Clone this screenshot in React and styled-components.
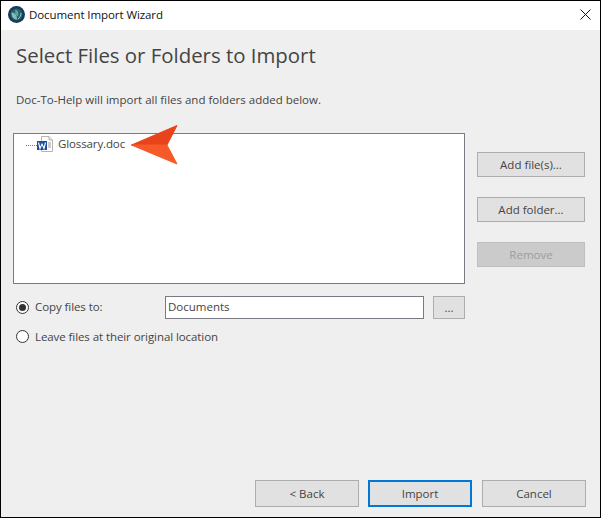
import React from 'react';
import styled, { createGlobalStyle } from 'styled-components';

const GlobalStyle = createGlobalStyle`
  html, body {
    margin: 0;
    padding: 0;
    background: #fff;
  }
  * {
    box-sizing: border-box;
  }
`;

const Window = styled.div`
  width: 601px;
  height: 518px;
  display: flex;
  flex-direction: column;
  border: 1px solid #000;
  background: #efefef;
  font-family: 'Open Sans', 'Noto Sans', sans-serif;
  font-size: 11.5px;
  color: #444;
`;

const TitleBar = styled.div`
  height: 29px;
  flex: none;
  display: flex;
  align-items: center;
  padding: 0 9px 2px 7px;
  background: #fff;
  color: #111;
`;

const TitleText = styled.span`
  margin-left: 4px;
  flex: 1;
  letter-spacing: -0.08px;
`;

const Body = styled.div`
  flex: 1;
  display: flex;
  flex-direction: column;
  padding: 0 14px 0 12px;
`;

const Heading = styled.h1`
  margin: 10px 0 0 3px;
  font-size: 20.4px;
  font-weight: 400;
  line-height: 30px;
  color: #444;
`;

const Intro = styled.p`
  margin: 22px 0 0 3px;
  line-height: 16px;
`;

const ListRow = styled.div`
  display: flex;
  gap: 12px;
  margin-top: 25px;
`;

const FileList = styled.div`
  position: relative;
  width: 452px;
  height: 151px;
  flex: none;
  background: #fff;
  border: 1px solid #7a7a84;
  padding: 1px 0 0 12px;
`;

const TreeItem = styled.div`
  display: flex;
  align-items: center;
  height: 18px;
`;

const TreeDots = styled.span`
  width: 11px;
  margin-top: 2px;
  border-top: 1px dotted #777;
`;

const FileName = styled.span`
  margin: 0 0 2px 5px;
  letter-spacing: -0.12px;
`;

const SideButtons = styled.div`
  display: flex;
  flex-direction: column;
  gap: 20px;
  padding-top: 19px;
`;

const Button = styled.button`
  width: ${p => p.$width || 108}px;
  height: ${p => p.$height || 25}px;
  padding: 0;
  font: inherit;
  color: ${p => (p.disabled ? '#9d9d9d' : '#444')};
  background: ${p => (p.disabled ? '#cbcbcb' : '#e1e1e1')};
  border: ${p => (p.$primary ? '2px solid #0078d7' : p.disabled ? '1px solid #bfbfbf' : '1px solid #adadad')};
`;

const OptionRow = styled.div`
  display: flex;
  align-items: center;
  height: ${p => p.$height}px;
  margin-top: ${p => p.$top}px;
  padding-left: 3px;
`;

const Radio = styled.span`
  width: 13px;
  height: 13px;
  flex: none;
  border: 1px solid #333;
  border-radius: 50%;
  background: #fff;
  display: flex;
  align-items: center;
  justify-content: center;

  &::after {
    content: '';
    display: ${p => (p.$checked ? 'block' : 'none')};
    width: 7px;
    height: 7px;
    border-radius: 50%;
    background: #333;
  }
`;

const OptionLabel = styled.span`
  margin: 0 0 ${p => (p.$fixed ? '2px' : '0')} 6px;
  width: ${p => (p.$fixed ? '130px' : 'auto')};
  letter-spacing: -0.08px;
`;

const PathInput = styled.div`
  width: 259px;
  height: 23px;
  display: flex;
  align-items: center;
  padding: 0 0 2px 2px;
  background: #fff;
  border: 1px solid #7a7a84;
`;

const BrowseButton = styled(Button)`
  margin-left: 9px;
  line-height: 1;
`;

const Footer = styled.div`
  margin-top: auto;
  display: flex;
  justify-content: flex-end;
  gap: 9px;
  padding: 0 0 10px;
`;

const FooterButton = styled(Button)`
  width: 104px;
  height: 27px;
  &:last-child {
    margin-left: 1px;
  }
`;

const Pointer = styled.svg`
  position: absolute;
  left: 116px;
  top: -10px;
`;

const WizardLogo = () => (
  <svg width="17" height="17" viewBox="0 0 17 17">
    <circle cx="8.5" cy="8.5" r="8.5" fill="#173a5c" />
    <circle cx="8.5" cy="8.5" r="6" fill="#2a5f72" />
    <path d="M3.500 6.500c3.500 0 5.500 2.500 5.500 7-3.500 0-5.500-2.500-5.500-7z" fill="#7cc0ad" />
    <path d="M7.500 3.500c2.500 1 3.500 3.500 2.500 7-2.200-1-3.500-3.500-2.500-7z" fill="#5aa897" />
    <path d="M10 13c2-1.500 3-3.500 3-6" fill="none" stroke="#9ad2c4" strokeWidth="1" />
  </svg>
);

const CloseIcon = () => (
  <svg width="11" height="11" viewBox="0 0 11 11">
    <path d="M0.500 0.500l10 10M10.500 0.500l-10 10" stroke="#111" strokeWidth="1" fill="none" />
  </svg>
);

const WordIcon = () => (
  <svg width="16" height="16" viewBox="0 0 16 16">
    <path d="M4.500 0.500h7.500l3.500 3.500v11.500h-11z" fill="#fff" stroke="#b4b4b4" />
    <path d="M12 0.500v3.500h3.500" fill="#e6e6e6" stroke="#b4b4b4" />
    <path d="M11 7h3M11 9h3M11 11h3" stroke="#9a9a9a" />
    <rect x="0" y="5" width="10" height="9" fill="#1f4f9c" />
    <path d="M1.500 6.500l1.500 6 2-4.500 2 4.500 1.500-6" fill="none" stroke="#fff" strokeWidth="1.100" />
  </svg>
);

const App = () => (
  <>
    <GlobalStyle />
    <Window>
      <TitleBar>
        <WizardLogo />
        <TitleText>Document Import Wizard</TitleText>
        <CloseIcon />
      </TitleBar>
      <Body>
        <Heading>Select Files or Folders to Import</Heading>
        <Intro>Doc-To-Help will import all files and folders added below.</Intro>
        <ListRow>
          <FileList>
            <TreeItem>
              <TreeDots />
              <WordIcon />
              <FileName>Glossary.doc</FileName>
            </TreeItem>
            <Pointer width="50" height="44" viewBox="0 0 50 44">
              <path d="M1.500 21L47 1.500L37 21Z" fill="#e8431b" stroke="#e8431b" strokeLinejoin="round" />
              <path d="M1.500 21L37 21L47 40Z" fill="#f65a29" stroke="#f65a29" strokeLinejoin="round" />
            </Pointer>
          </FileList>
          <SideButtons>
            <Button>Add file(s)...</Button>
            <Button>Add folder...</Button>
            <Button disabled>Remove</Button>
          </SideButtons>
        </ListRow>
        <OptionRow $top={12} $height={23}>
          <Radio $checked />
          <OptionLabel $fixed>Copy files to:</OptionLabel>
          <PathInput>Documents</PathInput>
          <BrowseButton $width={32} $height={23}>...</BrowseButton>
        </OptionRow>
        <OptionRow $top={5} $height={24}>
          <Radio />
          <OptionLabel>Leave files at their original location</OptionLabel>
        </OptionRow>
        <Footer>
          <FooterButton>&lt; Back</FooterButton>
          <FooterButton $primary>Import</FooterButton>
          <FooterButton>Cancel</FooterButton>
        </Footer>
      </Body>
    </Window>
  </>
);

export default App;
